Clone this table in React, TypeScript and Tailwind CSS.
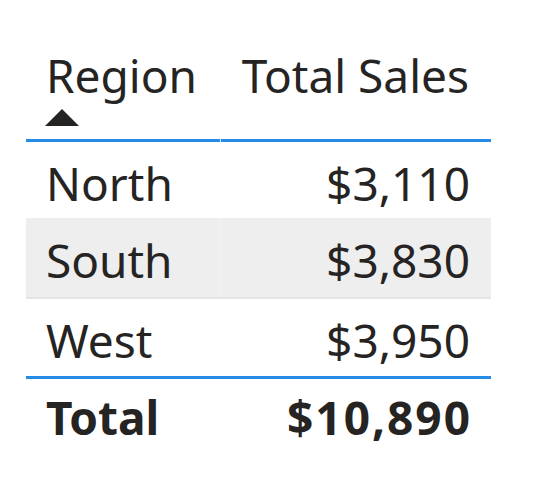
export default function App() {
  const font = { fontFamily: '"Segoe UI", "Noto Sans", "Open Sans", sans-serif' };
  return (
    <div className="w-[537px] h-[501px] bg-white text-[#252423]" style={font}>
      <div className="pl-[26px] pt-[40px] w-[491px]">
        {/* header */}
        <div className="flex h-[99px]">
          <div className="w-[194px] pl-[20px] pt-[7px] relative">
            <div className="text-[46px] leading-[56px]">Region</div>
            <svg className="absolute left-[19px] top-[69px]" width="34" height="18" viewBox="0 0 34 18">
              <polygon points="17,0 34,17 0,17" fill="#252423" />
            </svg>
          </div>
          <div className="w-[1px]" />
          <div className="flex-1 pr-[22px] pt-[7px] text-right">
            <div className="text-[46px] leading-[56px]">Total Sales</div>
          </div>
        </div>
        <div className="flex h-[3px]">
          <div className="w-[194px] bg-[#268be6]" />
          <div className="w-[1px] bg-[#cfe6fb]" />
          <div className="flex-1 bg-[#268be6]" />
        </div>
        {/* rows */}
        <div className="flex h-[76px] items-center pt-[6px]">
          <div className="w-[194px] pl-[20px] text-[46px]">North</div>
          <div className="w-[1px]" />
          <div className="flex-1 pr-[21px] text-right text-[46px]">$3,110</div>
        </div>
        <div className="flex h-[81px] border-b-2 border-[#e4e4e4]">
          <div className="w-[194px] pl-[20px] pt-[6px] text-[46px] bg-[#eeeeee] flex items-center">South</div>
          <div className="w-[1px] bg-[#f4f4f4]" />
          <div className="flex-1 pr-[21px] pt-[6px] text-[46px] bg-[#eeeeee] flex items-center justify-end">$3,830</div>
        </div>
        <div className="flex h-[77px] items-center pt-[6px]">
          <div className="w-[194px] pl-[20px] text-[46px]">West</div>
          <div className="w-[1px]" />
          <div className="flex-1 pr-[21px] text-right text-[46px]">$3,950</div>
        </div>
        <div className="h-[3px] bg-[#268be6]" />
        <div className="flex h-[76px] items-center font-bold">
          <div className="w-[194px] pl-[20px] text-[46px]">Total</div>
          <div className="w-[1px]" />
          <div className="flex-1 pr-[19px] text-right text-[46px] tracking-[2px]">$10,890</div>
        </div>
      </div>
    </div>
  );
}
